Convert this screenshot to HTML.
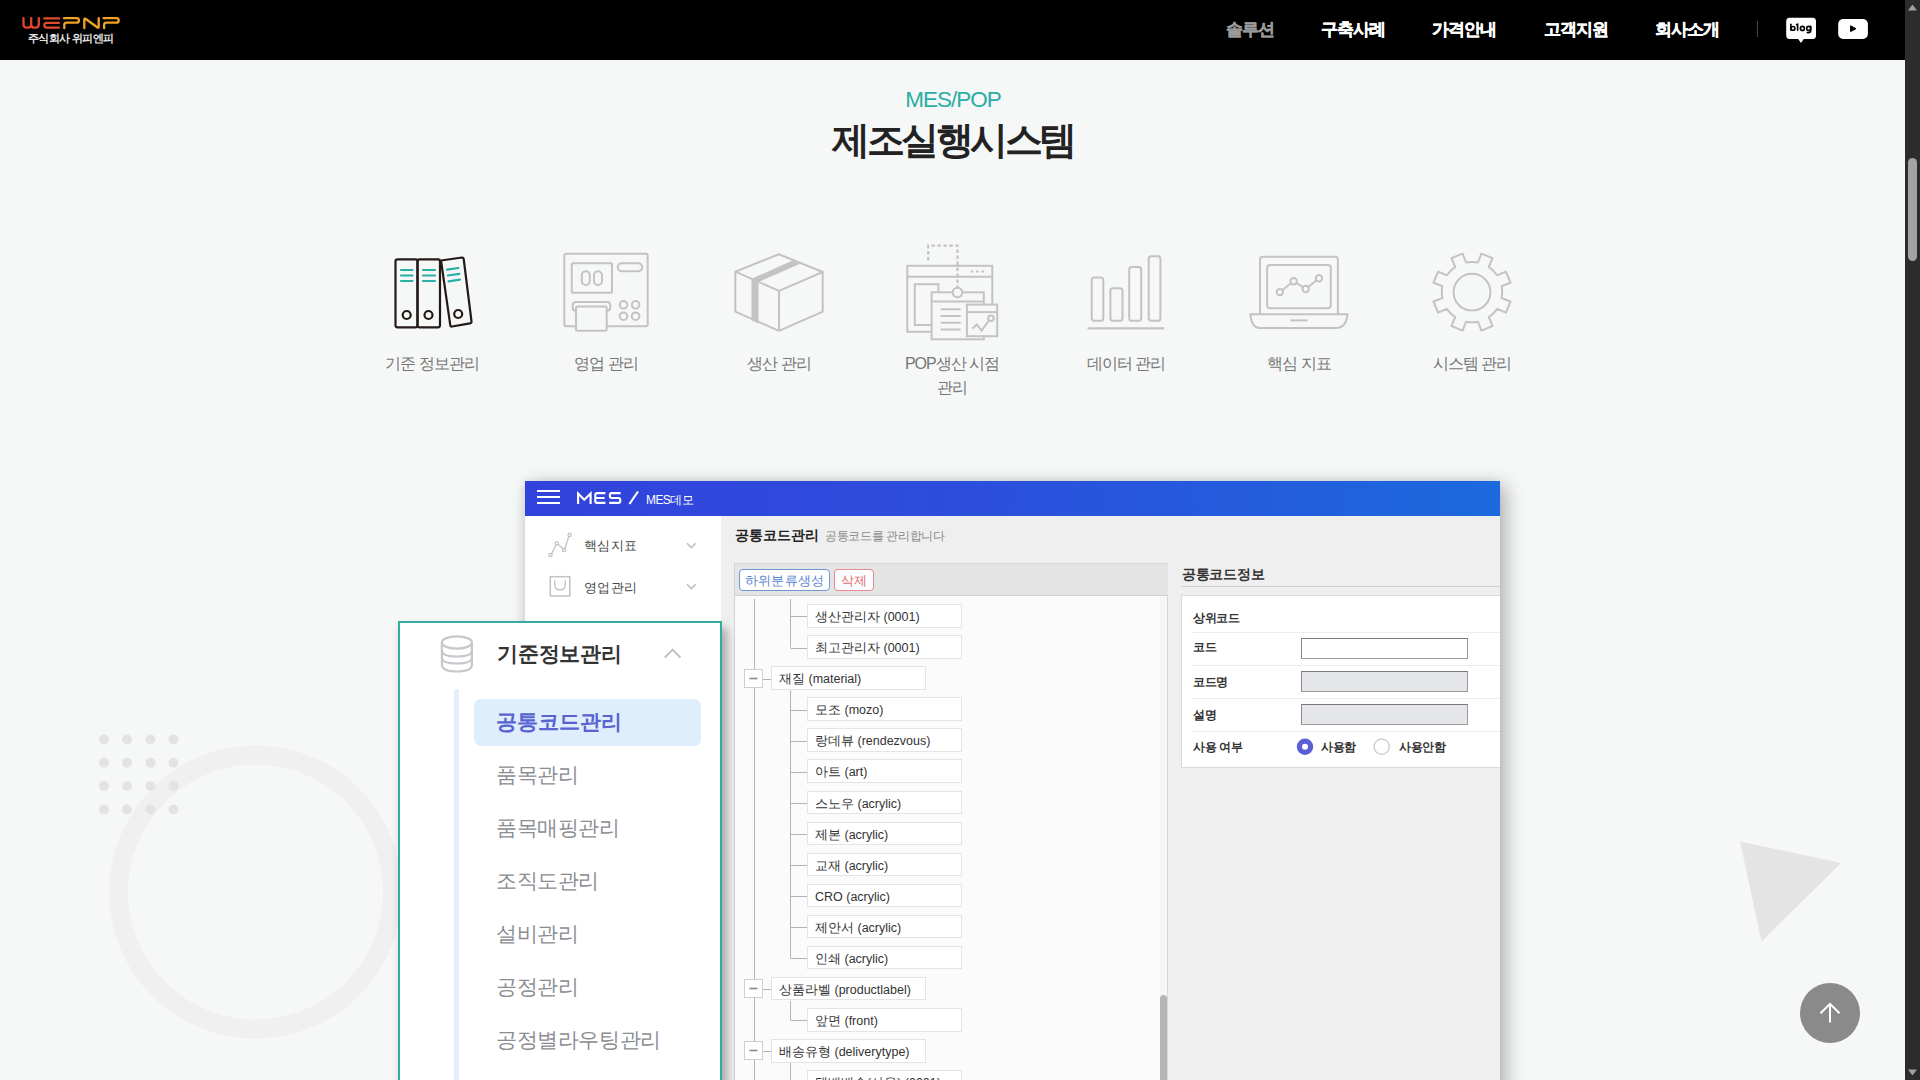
<!DOCTYPE html>
<html><head><meta charset="utf-8">
<style>
*{margin:0;padding:0;box-sizing:border-box}
html,body{width:1920px;height:1080px;overflow:hidden}
body{background:#f6f7f7;font-family:"Liberation Sans",sans-serif;position:relative}
.a{position:absolute;white-space:nowrap;line-height:1}
#hdr{position:absolute;left:0;top:0;width:1905px;height:60px;background:#000}
.nav{position:absolute;top:21px;font-size:17px;font-weight:700;color:#fff;letter-spacing:-1px;line-height:1;-webkit-text-stroke:0.35px currentColor}
#sb{position:absolute;left:1905px;top:0;width:15px;height:1080px;background:#2c2c2c}
#shot{position:absolute;left:525px;top:481px;width:975px;height:620px;background:#efefef;box-shadow:6px 4px 18px rgba(0,0,0,.28),-2px 0 8px rgba(0,0,0,.08)}
#pop{position:absolute;left:398px;top:621px;width:324px;height:500px;background:#fff;border:2px solid #33aca1;box-shadow:7px 5px 9px -2px rgba(0,0,0,.3),-3px 2px 7px -2px rgba(0,0,0,.09)}
.lbl{position:absolute;top:356px;font-size:16px;color:#777;letter-spacing:-1px;line-height:1;text-align:center;width:160px}
.tn{height:23.5px;background:#fff;border:1px solid #e4e4e4;font-size:12.5px;color:#333;line-height:25px;padding-left:7px;letter-spacing:0}
.rl{left:1193px;font-size:12px;font-weight:700;color:#333;letter-spacing:-0.3px}
.inp{left:1301px;width:167px;height:21px;background:#e4e6e9;border:1px solid #9a9a9a;border-top-color:#7a7a7a;border-left-color:#888}
.pi{left:496px;font-size:21px;color:#8a8d92;letter-spacing:-0.4px}
</style></head><body>

<!-- decorations -->
<svg class="a" style="left:0;top:0" width="1905" height="1080" viewBox="0 0 1905 1080">
  <circle cx="255.5" cy="892" r="137" fill="none" stroke="#f0f0f0" stroke-width="19"/>
  <g fill="#e3e3e3">
    <circle cx="104" cy="739.5" r="5"/><circle cx="127" cy="739.5" r="5"/><circle cx="150.5" cy="739.5" r="5"/><circle cx="173.5" cy="739.5" r="5"/>
    <circle cx="104" cy="762.7" r="5"/><circle cx="127" cy="762.7" r="5"/><circle cx="150.5" cy="762.7" r="5"/><circle cx="173.5" cy="762.7" r="5"/>
    <circle cx="104" cy="786" r="5"/><circle cx="127" cy="786" r="5"/><circle cx="150.5" cy="786" r="5"/><circle cx="173.5" cy="786" r="5"/>
    <circle cx="104" cy="809.5" r="5"/><circle cx="127" cy="809.5" r="5"/><circle cx="150.5" cy="809.5" r="5"/><circle cx="173.5" cy="809.5" r="5"/>
  </g>
  <polygon points="1740,841.5 1841,863 1761.5,941.5" fill="#e4e4e4"/>
</svg>

<!-- header -->
<div id="hdr"></div>
<svg class="a" style="left:0;top:0" width="200" height="60" viewBox="0 0 200 60">
  <g fill="none" stroke-width="2.3" stroke-linecap="round" stroke-linejoin="round">
    <path d="M23.5,18.2 V24.6 Q23.5,27.6 26.5,27.6 H28.2 Q31.2,27.6 31.2,24.6 V18.2 M31.2,24.6 Q31.2,27.6 34.2,27.6 H35.8 Q38.8,27.6 38.8,24.6 V18.2" stroke="#e0472b"/>
    <path d="M44.3,18.4 H59 M59,22.8 H46.8 Q44.3,22.8 44.3,25.2 Q44.3,27.6 46.8,27.6 H59" stroke="#e24c2a"/>
    <path d="M64,18.2 H76.6 Q78.9,18.2 78.9,20.45 Q78.9,22.7 76.6,22.7 H66.6 Q64.3,22.7 64.3,25 V28.2" stroke="#f0a326"/>
    <path d="M84.3,28.2 V19.6 Q84.3,18 85.8,19 L97.2,27.3 Q98.7,28.4 98.7,26.8 V18.2" stroke="#f0a326"/>
    <path d="M103.6,18.2 H116.4 Q118.7,18.2 118.7,20.45 Q118.7,22.7 116.4,22.7 H106.4 Q104.1,22.7 104.1,25 V28.2" stroke="#f0a326"/>
  </g>
</svg>
<div class="a" style="left:28px;top:33px;font-size:11px;color:#e6e6e6;letter-spacing:-0.6px;font-weight:700">주식회사 위피엔피</div>

<div class="nav" style="left:1226px;color:#9a9a9a">솔루션</div>
<div class="nav" style="left:1321px">구축사례</div>
<div class="nav" style="left:1432px">가격안내</div>
<div class="nav" style="left:1544px">고객지원</div>
<div class="nav" style="left:1655px">회사소개</div>
<div class="a" style="left:1757px;top:21px;width:1px;height:16px;background:#444"></div>
<svg class="a" style="left:1780px;top:12px" width="100" height="36" viewBox="1780 12 100 36">
  <path d="M1789.7,17.8 H1812.5 Q1816,17.8 1816,21.3 V35.5 Q1816,39 1812.5,39 H1803.8 L1801,43 L1798.2,39 H1789.7 Q1786.2,39 1786.2,35.5 V21.3 Q1786.2,17.8 1789.7,17.8 Z" fill="#fff"/>
  <g fill="none" stroke="#000" stroke-width="1.6" stroke-linecap="round">
    <path d="M1790.9,24.3 V30.3"/><circle cx="1793" cy="28.4" r="1.9"/>
    <path d="M1796.6,24.6 L1797.6,24.3 V30.3"/>
    <circle cx="1802.4" cy="28.4" r="2"/>
    <circle cx="1808.7" cy="28.4" r="2"/><path d="M1810.7,26.4 V31 Q1810.7,32.6 1808.2,32.6 H1807.3"/>
  </g>
  <rect x="1838.2" y="19" width="29.7" height="20" rx="5" fill="#fff"/>
  <path d="M1850.6,25.8 L1856,28.7 L1850.6,31.6 Z" fill="#000" stroke="#000" stroke-width="1" stroke-linejoin="round"/>
</svg>

<!-- scrollbar -->
<div id="sb"></div>
<svg class="a" style="left:1905px;top:0" width="15" height="1080" viewBox="0 0 15 1080">
  <polygon points="7.5,4.5 12,10.5 3,10.5" fill="#a0a0a0"/>
  <rect x="3" y="158" width="9" height="103" rx="4.5" fill="#a3a3a3"/>
  <polygon points="3,1069.5 12,1069.5 7.5,1075.5" fill="#a0a0a0"/>
</svg>

<!-- title -->
<div class="a" style="left:0;width:1905px;text-align:center;top:89px;font-size:22.5px;letter-spacing:-1px;text-indent:1px;color:#28aea2">MES/POP</div>
<div class="a" style="left:0;width:1905px;text-align:center;top:121px;font-size:38px;font-weight:700;color:#222;letter-spacing:-3.5px;text-indent:0.5px">제조실행시스템</div>

<!-- icons -->
<svg class="a" style="left:0;top:0" width="1905" height="420" viewBox="0 0 1905 420">
  <!-- binders -->
  <g fill="none" stroke="#231a17" stroke-width="2.2" stroke-linejoin="round">
    <rect x="395.5" y="259.3" width="22" height="68" rx="2"/>
    <rect x="417.5" y="259.3" width="22.5" height="68" rx="2"/>
    <path d="M441,260.5 L462,257.5 Q463.5,257.5 463.7,259 L471.5,321.5 Q471.7,323 470,323.3 L452,326.5 Q450.5,326.8 450.3,325.3 Z"/>
    <circle cx="406.7" cy="315" r="4"/><circle cx="428.5" cy="315" r="4"/><circle cx="458.2" cy="314" r="4"/>
  </g>
  <g fill="none" stroke="#2bb0a5" stroke-width="2.2" stroke-linecap="round">
    <path d="M401,270 H412.5 M401,275.5 H412.5 M401,281 H412.5"/>
    <path d="M423,270 H435 M423,275.5 H435 M423,281 H435"/>
    <path d="M447,269.7 L458.5,268 M447.8,275.5 L459.3,273.8 M448.5,281.3 L460,279.6"/>
  </g>
  <!-- pos -->
  <g fill="none" stroke="#c3c3c3" stroke-width="2">
    <rect x="564.3" y="253.8" width="83.4" height="72.5" rx="2"/>
    <rect x="571.8" y="263.2" width="40.2" height="29.5" rx="1"/>
    <rect x="581.8" y="271.2" width="8" height="13.8" rx="4"/>
    <rect x="594" y="271.2" width="8" height="13.8" rx="4"/>
    <rect x="617.7" y="263.2" width="24.5" height="8" rx="4"/>
    <path d="M576,310.8 Q572.7,310.8 572.7,307.5 V305.3 Q572.7,302 576,302 H607 Q610.3,302 610.3,305.3 V307.5 Q610.3,310.8 607,310.8"/>
    <circle cx="623.5" cy="304.8" r="3.8"/><circle cx="635.6" cy="304.8" r="3.8"/>
    <circle cx="623.5" cy="316.2" r="3.8"/><circle cx="635.6" cy="316.2" r="3.8"/>
  </g>
  <rect x="576" y="306.5" width="30.7" height="24.3" rx="1.5" fill="#f6f7f7" stroke="#c3c3c3" stroke-width="2"/>
  <!-- box -->
  <g fill="none" stroke="#c3c3c3" stroke-width="2" stroke-linejoin="round">
    <path d="M778.8,254.2 L822.7,272 L779,290.8 L735.3,271.7 Z"/>
    <path d="M735.3,271.7 V311.7 L779,330.8 L822.7,311.7 V272 M779,290.8 V330.8"/>
  </g>
  <polygon points="751.5,278.8 758.6,282 800.2,263.8 792,260.8" fill="#c3c3c3"/>
  <polygon points="751.5,278.8 758.6,282 758.6,323.5 751.5,320.4" fill="#c3c3c3"/>
  <!-- pop -->
  <g fill="none" stroke="#c3c3c3" stroke-width="2">
    <rect x="907.3" y="265.8" width="85" height="66" fill="#f6f7f7"/>
    <path d="M928.2,260.4 V245.6 H957.5 V287" stroke-dasharray="3.5 2.5" stroke-width="2.2"/>
    <path d="M907.3,276.7 H992.3"/>
    <rect x="914.8" y="284.2" width="23.6" height="40.8"/>
    <rect x="931.6" y="292.3" width="52.2" height="47" fill="#f6f7f7"/>
    <path d="M931.6,301.4 H983.8"/>
    <path d="M940.8,309.2 H960.7 M940.8,316 H960.7 M940.8,322.8 H960.7 M940.8,329.5 H960.7"/>
    <circle cx="957.5" cy="292.5" r="4.8" fill="#f6f7f7"/>
    <rect x="966.9" y="304.6" width="30.3" height="31.6" fill="#f6f7f7"/>
    <path d="M966.9,312.1 H997.2"/>
    <path d="M972.4,328.4 L976.8,324.5 L981.6,330.6 L988.6,320.8"/>
    <circle cx="990.9" cy="318.2" r="2.8"/>
  </g>
  <g fill="#c3c3c3"><circle cx="971.9" cy="271.5" r="1.2"/><circle cx="977.3" cy="271.5" r="1.2"/><circle cx="982.9" cy="271.5" r="1.2"/></g>
  <!-- bars -->
  <g fill="none" stroke="#c3c3c3" stroke-width="2">
    <rect x="1091.7" y="277.5" width="11.6" height="43.3" rx="2.5"/>
    <rect x="1110.4" y="288.3" width="12.1" height="32.5" rx="2.5"/>
    <rect x="1129.2" y="267.1" width="12" height="53.7" rx="2.5"/>
    <rect x="1148.7" y="256.2" width="11.7" height="64.6" rx="2.5"/>
    <path d="M1087.5,328.3 H1164.2" stroke-width="2.2"/>
  </g>
  <!-- laptop -->
  <g fill="none" stroke="#c3c3c3" stroke-width="2">
    <path d="M1260,314.2 V259.7 Q1260,256.7 1263,256.7 H1334.9 Q1337.9,256.7 1337.9,259.7 V314.2"/>
    <rect x="1267.1" y="265" width="63.7" height="43.3" rx="3"/>
    <path d="M1250.4,314.2 H1347.5 Q1346,327.9 1337,327.9 H1259.5 Q1251.5,327.9 1250.4,314.2 Z"/>
    <path d="M1290.4,320.4 H1307.5"/>
    <path d="M1282.3,290 L1291.1,283.3 M1296.3,283 L1303,287.2 M1308.2,287 L1316.5,280.3"/>
    <circle cx="1279.8" cy="292.1" r="3.2"/><circle cx="1293.6" cy="281.3" r="3.2"/>
    <circle cx="1305.7" cy="289" r="3.2"/><circle cx="1319" cy="278.3" r="3.2"/>
  </g>
  <!-- gear -->
  <g fill="none" stroke="#c3c3c3" stroke-width="2" stroke-linejoin="round">
    <path d="M1477.9,262.5 L1481.4,253.6 L1492.5,258.2 L1488.8,267.0 A30.2,30.2 0 0 1 1497.1,275.3 L1505.9,271.6 L1510.5,282.7 L1501.6,286.2 A30.2,30.2 0 0 1 1501.6,298.0 L1510.5,301.5 L1505.9,312.6 L1497.1,308.9 A30.2,30.2 0 0 1 1488.8,317.2 L1492.5,326.0 L1481.4,330.6 L1477.9,321.7 A30.2,30.2 0 0 1 1466.1,321.7 L1462.6,330.6 L1451.5,326.0 L1455.2,317.2 A30.2,30.2 0 0 1 1446.9,308.9 L1438.1,312.6 L1433.5,301.5 L1442.4,298.0 A30.2,30.2 0 0 1 1442.4,286.2 L1433.5,282.7 L1438.1,271.6 L1446.9,275.3 A30.2,30.2 0 0 1 1455.2,267.0 L1451.5,258.2 L1462.6,253.6 L1466.1,262.5 A30.2,30.2 0 0 1 1477.9,262.5 Z"/>
    <circle cx="1472" cy="292.2" r="18.4"/>
  </g>
</svg>
<div class="lbl" style="left:352px">기준 정보관리</div>
<div class="lbl" style="left:526px">영업 관리</div>
<div class="lbl" style="left:699px">생산 관리</div>
<div class="lbl" style="left:872px;line-height:24px;top:352px;white-space:normal;width:160px">POP생산 시점<br>관리</div>
<div class="lbl" style="left:1046px">데이터 관리</div>
<div class="lbl" style="left:1219px">핵심 지표</div>
<div class="lbl" style="left:1392px">시스템 관리</div>

<!-- screenshot -->
<div id="shot"></div>
<div class="a" style="left:525px;top:481px;width:975px;height:35px;background:linear-gradient(90deg,#3242dc 0%,#2c4edc 45%,#1c69de 100%)"></div>
<div class="a" style="left:537px;top:490px;width:23px;height:2px;background:#fff"></div>
<div class="a" style="left:537px;top:496px;width:23px;height:2px;background:#fff"></div>
<div class="a" style="left:537px;top:502px;width:23px;height:2px;background:#fff"></div>
<svg class="a" style="left:572px;top:486px" width="56" height="24" viewBox="572 486 56 24"><g fill="none" stroke="#fff" stroke-width="2.1">
  <path d="M578.1,504 V493.6 L584.3,499.8 L590.6,493.6 V504" stroke-linejoin="miter"/>
  <path d="M605.4,493.1 H597 Q595.3,493.1 595.3,494.8 V501.2 Q595.3,502.9 597,502.9 H605.4 M595.3,498 H604.6"/>
  <path d="M620.6,493.1 H611.6 Q609.9,493.1 609.9,494.8 V496.3 Q609.9,498 611.6,498 H618.5 Q620.2,498 620.2,499.7 V501.2 Q620.2,502.9 618.5,502.9 H609.2"/>
</g></svg>
<svg class="a" style="left:627px;top:490px" width="14" height="16" viewBox="0 0 14 16"><path d="M2.5,14 L11,1.5" stroke="#fff" stroke-width="2.2"/></svg>
<div class="a" style="left:646px;top:493.5px;font-size:12px;color:#fff;letter-spacing:-0.6px">MES데모</div>
<!-- sidebar -->
<div class="a" style="left:525px;top:516px;width:196px;height:600px;background:#fff"></div>
<svg class="a" style="left:525px;top:516px" width="196" height="110" viewBox="525 516 196 110">
  <g fill="none" stroke="#c2c2c2" stroke-width="1.3">
    <path d="M551.7,553.6 L556.2,544.8 M558.2,544.6 L563,548.6 M565,548.3 L568.8,536.4"/>
    <circle cx="550.5" cy="555" r="1.6"/><circle cx="556.8" cy="543.3" r="1.6"/><circle cx="564" cy="549.9" r="1.6"/><circle cx="569.6" cy="535" r="1.6"/>
    <rect x="550.3" y="576.7" width="19.5" height="19.3" stroke-width="1.5"/>
    <path d="M554.7,580.5 V584.5 Q554.7,589.8 560,589.8 Q565.3,589.8 565.3,584.5 V580.5" stroke-width="1.4"/>
    <path d="M687,543.3 L691.4,547.7 L695.8,543.3 M687,584.2 L691.4,588.6 L695.8,584.2" stroke="#bdbdbd" stroke-width="1.6"/>
  </g>
</svg>
<div class="a" style="left:584px;top:539px;font-size:13px;color:#444;letter-spacing:0.4px">핵심지표</div>
<div class="a" style="left:584px;top:581px;font-size:13px;color:#444;letter-spacing:0.4px">영업관리</div>
<!-- content header -->
<div class="a" style="left:735px;top:528px;font-size:14px;font-weight:700;color:#222;letter-spacing:0.1px">공통코드관리</div>
<div class="a" style="left:825px;top:531px;font-size:11.5px;color:#8a8a8a;letter-spacing:-0.3px">공통코드를 관리합니다</div>
<!-- tree panel -->
<div class="a" style="left:734px;top:563px;width:434px;height:33px;background:#e4e4e4;border-left:1px solid #d2d2d2;border-top:1px solid #d8d8d8;border-bottom:1px solid #cfcfcf"></div>
<div class="a" style="left:734px;top:596px;width:433px;height:520px;background:#fbfbfb;border-left:1px solid #d2d2d2"></div>
<div class="a" style="left:1160px;top:596px;width:8px;height:520px;background:#f6f6f6;border-right:1px solid #d6d6d6"></div>
<div class="a" style="left:1160px;top:995px;width:7px;height:100px;background:#b5b5b5;border-radius:3.5px 3.5px 0 0"></div>
<div class="a" style="left:739px;top:569px;width:91px;height:22px;border:1.2px solid #6b98d4;border-radius:4px;background:#fff"></div>
<div class="a" style="left:745px;top:574px;font-size:13px;color:#5a84d0;letter-spacing:0.2px">하위분류생성</div>
<div class="a" style="left:834px;top:569px;width:40px;height:22px;border:1.2px solid #e88890;border-radius:4px;background:#fff"></div>
<div class="a" style="left:841px;top:574px;font-size:13px;color:#e26a74;letter-spacing:0.2px">삭제</div>
<!-- right panel -->
<div class="a" style="left:1182px;top:567.5px;font-size:13.5px;font-weight:700;color:#333;letter-spacing:-0.3px">공통코드정보</div>
<div class="a" style="left:1181px;top:586px;width:319px;height:1px;background:#cfcfcf"></div>
<div class="a" style="left:1181px;top:595px;width:319px;height:173px;background:#fff;border:1px solid #dadada;border-right:0"></div>
<div class="a" style="left:1193px;top:632px;width:307px;height:1px;background:#ececec"></div>
<div class="a" style="left:1193px;top:665px;width:307px;height:1px;background:#ececec"></div>
<div class="a" style="left:1193px;top:698px;width:307px;height:1px;background:#ececec"></div>
<div class="a" style="left:1193px;top:731px;width:307px;height:1px;background:#ececec"></div>
<div class="a rl" style="top:612px">상위코드</div>
<div class="a rl" style="top:641px">코드</div>
<div class="a rl" style="top:675.5px">코드명</div>
<div class="a rl" style="top:709px">설명</div>
<div class="a rl" style="top:741px">사용 여부</div>
<div class="a inp" style="top:638px;background:#fff"></div>
<div class="a inp" style="top:671px"></div>
<div class="a inp" style="top:704px"></div>
<svg class="a" style="left:1295px;top:736px" width="100" height="22" viewBox="1295 736 100 22">
  <circle cx="1305" cy="746.7" r="8.2" fill="#5b5fd6"/><circle cx="1305" cy="746.7" r="3" fill="#fff"/>
  <circle cx="1381.7" cy="746.7" r="7.6" fill="#fff" stroke="#c8c8c8" stroke-width="1.2"/>
</svg>
<div class="a rl" style="left:1321px;top:741px;font-weight:700">사용함</div>
<div class="a rl" style="left:1399px;top:741px;font-weight:700">사용안함</div>

<svg class="a" style="left:734px;top:596px" width="426" height="500" viewBox="734 596 426 500"><g stroke="#b4b4b4" stroke-width="1" fill="none">
<path d="M754.5,599 V1100"/>
<path d="M790.5,599.0 V647.6"/>
<path d="M790.5,690.4 V958.3"/>
<path d="M790.5,1001.1 V1020.4"/>
<path d="M790.5,1063.2 V1100.0"/>
<path d="M790.5,616.5 H808"/>
<path d="M790.5,648.5 H808"/>
<path d="M762.5,679.5 H772"/>
<path d="M790.5,710.5 H808"/>
<path d="M790.5,741.5 H808"/>
<path d="M790.5,772.5 H808"/>
<path d="M790.5,803.5 H808"/>
<path d="M790.5,834.5 H808"/>
<path d="M790.5,865.5 H808"/>
<path d="M790.5,896.5 H808"/>
<path d="M790.5,927.5 H808"/>
<path d="M790.5,958.5 H808"/>
<path d="M762.5,989.5 H772"/>
<path d="M790.5,1020.5 H808"/>
<path d="M762.5,1051.5 H772"/>
<path d="M790.5,1083.5 H808"/>
</g>
<rect x="744.5" y="669.5" width="18" height="18" fill="#fff" stroke="#cfcfcf"/>
<path d="M749.5,678.5 H757.5" stroke="#8c8c8c" stroke-width="1.7"/>
<rect x="744.5" y="979.5" width="18" height="18" fill="#fff" stroke="#cfcfcf"/>
<path d="M749.5,988.5 H757.5" stroke="#8c8c8c" stroke-width="1.7"/>
<rect x="744.5" y="1041.5" width="18" height="18" fill="#fff" stroke="#cfcfcf"/>
<path d="M749.5,1050.5 H757.5" stroke="#8c8c8c" stroke-width="1.7"/>
</svg>
<div class="a tn" style="left:807.0px;top:604.0px;width:155.0px"><span>생산관리자 (0001)</span></div>
<div class="a tn" style="left:807.0px;top:635.0px;width:155.0px"><span>최고관리자 (0001)</span></div>
<div class="a tn" style="left:771.0px;top:666.1px;width:154.5px"><span>재질 (material)</span></div>
<div class="a tn" style="left:807.0px;top:697.2px;width:155.0px"><span>모조 (mozo)</span></div>
<div class="a tn" style="left:807.0px;top:728.2px;width:155.0px"><span>랑데뷰 (rendezvous)</span></div>
<div class="a tn" style="left:807.0px;top:759.4px;width:155.0px"><span>아트 (art)</span></div>
<div class="a tn" style="left:807.0px;top:790.5px;width:155.0px"><span>스노우 (acrylic)</span></div>
<div class="a tn" style="left:807.0px;top:821.5px;width:155.0px"><span>제본 (acrylic)</span></div>
<div class="a tn" style="left:807.0px;top:852.5px;width:155.0px"><span>교재 (acrylic)</span></div>
<div class="a tn" style="left:807.0px;top:883.6px;width:155.0px"><span>CRO (acrylic)</span></div>
<div class="a tn" style="left:807.0px;top:914.8px;width:155.0px"><span>제안서 (acrylic)</span></div>
<div class="a tn" style="left:807.0px;top:945.8px;width:155.0px"><span>인쇄 (acrylic)</span></div>
<div class="a tn" style="left:771.0px;top:976.9px;width:154.5px"><span>상품라벨 (productlabel)</span></div>
<div class="a tn" style="left:807.0px;top:1008.0px;width:155.0px"><span>앞면 (front)</span></div>
<div class="a tn" style="left:771.0px;top:1039.0px;width:154.5px"><span>배송유형 (deliverytype)</span></div>
<div class="a tn" style="left:807.0px;top:1070.0px;width:155.0px"><span>택배배송(사용) (0001)</span></div>

<!-- popout -->
<div id="pop"></div>
<svg class="a" style="left:436px;top:630px" width="50" height="50" viewBox="436 630 50 50">
  <g fill="none" stroke="#c6c8cd" stroke-width="2.2">
    <ellipse cx="456.9" cy="642.5" rx="15" ry="6.2"/>
    <path d="M441.9,642.5 V664.5 Q441.9,671.5 456.9,671.5 Q471.9,671.5 471.9,664.5 V642.5"/>
    <path d="M441.9,650.5 Q441.9,656.5 456.9,656.5 Q471.9,656.5 471.9,650.5"/>
    <path d="M441.9,657.5 Q441.9,663.5 456.9,663.5 Q471.9,663.5 471.9,657.5"/>
  </g>
</svg>
<div class="a" style="left:497px;top:643px;font-size:21px;font-weight:700;color:#333;letter-spacing:-0.2px">기준정보관리</div>
<svg class="a" style="left:660px;top:644px" width="26" height="18" viewBox="660 644 26 18"><path d="M664.8,657.5 L672.6,649.7 L680.4,657.5" fill="none" stroke="#bdbdbd" stroke-width="1.8"/></svg>
<div class="a" style="left:454px;top:689px;width:5px;height:420px;background:#e2effc;border-radius:2.5px"></div>
<div class="a" style="left:474px;top:699px;width:227px;height:47px;background:#deeefc;border-radius:7px"></div>
<div class="a pi" style="top:711px;color:#5862d0;font-weight:700;letter-spacing:0">공통코드관리</div>
<div class="a pi" style="top:764px">품목관리</div>
<div class="a pi" style="top:817px">품목매핑관리</div>
<div class="a pi" style="top:870px">조직도관리</div>
<div class="a pi" style="top:923px">설비관리</div>
<div class="a pi" style="top:976px">공정관리</div>
<div class="a pi" style="top:1029px">공정별라우팅관리</div>

<!-- top button -->
<svg class="a" style="left:1790px;top:973px" width="80" height="80" viewBox="1790 973 80 80">
  <circle cx="1830" cy="1013" r="30" fill="#8a8a8a"/>
  <path d="M1830,1022.5 V1003.8 M1820.5,1013.3 L1830,1003.8 L1839.5,1013.3" fill="none" stroke="#fff" stroke-width="2"/>
</svg>
</body></html>
